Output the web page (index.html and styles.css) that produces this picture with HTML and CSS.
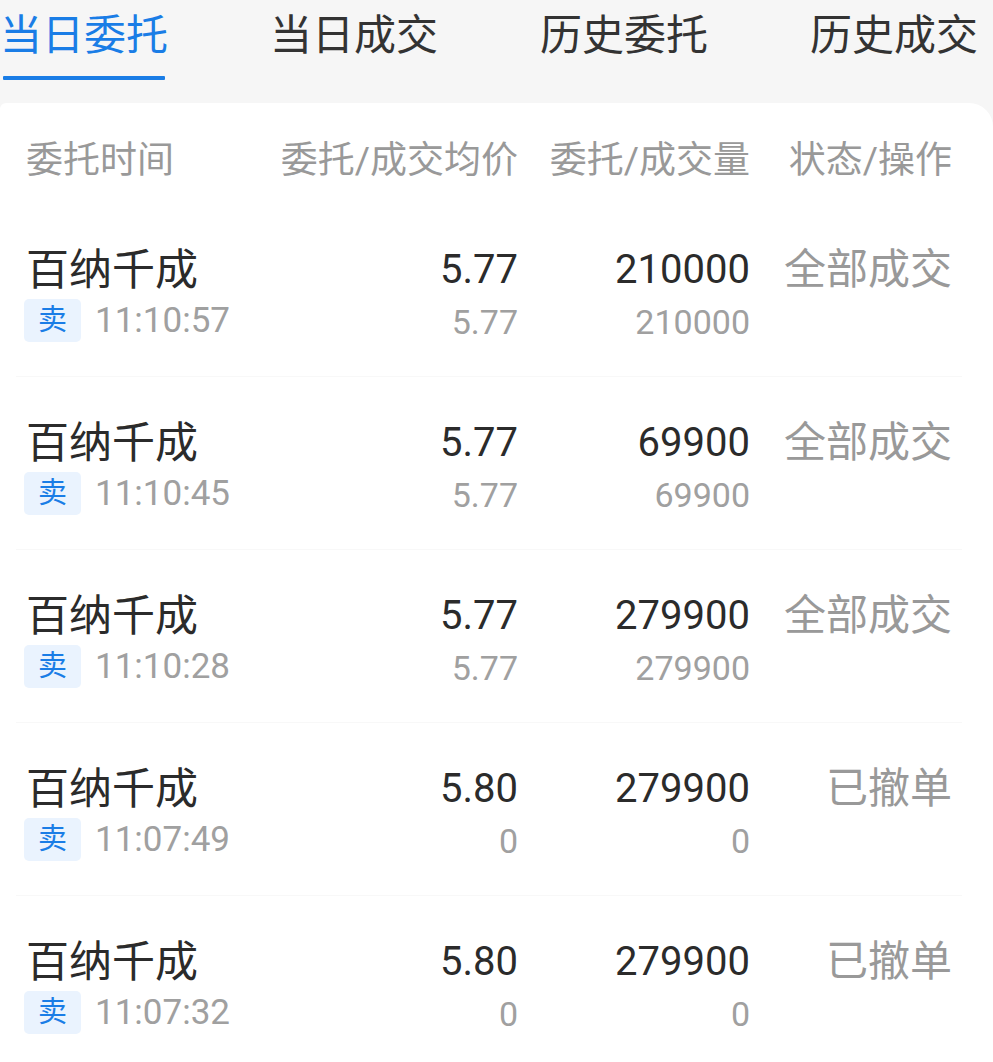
FILE: index.html
```html
<!DOCTYPE html>
<html lang="zh-CN">
<head>
	<meta charset="UTF-8">
	<title>当日委托</title>
	<link rel="stylesheet" href="styles.css">
</head>
<body>
	<div class="tabs">
		<div class="tab active">当日委托</div>
		<div class="tab">当日成交</div>
		<div class="tab">历史委托</div>
		<div class="tab">历史成交</div>
	</div>

	<div class="card">
		<div class="row head">
			<div class="c1">委托时间</div>
			<div class="c2">委托/成交均价</div>
			<div class="c3">委托/成交量</div>
			<div class="c4">状态/操作</div>
		</div>

		<div class="row order">
			<div class="c1">
				<div class="main">百纳千成</div>
				<div class="sub"><span class="side">卖</span>11:10:57</div>
			</div>
			<div class="c2"><div class="main">5.77</div><div class="sub">5.77</div></div>
			<div class="c3"><div class="main">210000</div><div class="sub">210000</div></div>
			<div class="c4"><div class="main state">全部成交</div></div>
		</div>

		<div class="row order">
			<div class="c1">
				<div class="main">百纳千成</div>
				<div class="sub"><span class="side">卖</span>11:10:45</div>
			</div>
			<div class="c2"><div class="main">5.77</div><div class="sub">5.77</div></div>
			<div class="c3"><div class="main">69900</div><div class="sub">69900</div></div>
			<div class="c4"><div class="main state">全部成交</div></div>
		</div>

		<div class="row order">
			<div class="c1">
				<div class="main">百纳千成</div>
				<div class="sub"><span class="side">卖</span>11:10:28</div>
			</div>
			<div class="c2"><div class="main">5.77</div><div class="sub">5.77</div></div>
			<div class="c3"><div class="main">279900</div><div class="sub">279900</div></div>
			<div class="c4"><div class="main state">全部成交</div></div>
		</div>

		<div class="row order">
			<div class="c1">
				<div class="main">百纳千成</div>
				<div class="sub"><span class="side">卖</span>11:07:49</div>
			</div>
			<div class="c2"><div class="main">5.80</div><div class="sub">0</div></div>
			<div class="c3"><div class="main">279900</div><div class="sub">0</div></div>
			<div class="c4"><div class="main state">已撤单</div></div>
		</div>

		<div class="row order">
			<div class="c1">
				<div class="main">百纳千成</div>
				<div class="sub"><span class="side">卖</span>11:07:32</div>
			</div>
			<div class="c2"><div class="main">5.80</div><div class="sub">0</div></div>
			<div class="c3"><div class="main">279900</div><div class="sub">0</div></div>
			<div class="c4"><div class="main state">已撤单</div></div>
		</div>
	</div>
</body>
</html>
```

FILE: styles.css
```css
body {
	margin: 0;
	background-color: #f6f6f6;
	font-family: Roboto, "Noto Sans CJK SC", sans-serif;
	color: #333;
}
.tabs {
	display: flex;
	gap: 102px;
	height: 103px;
	padding-top: 8px;
	box-sizing: border-box;
}
.tab {
	font-size: 42px;
	line-height: 56px;
	color: #333;
}
.tab.active {
	color: #1a7de6;
}
.tab.active::after {
	content: "";
	display: block;
	height: 4px;
	margin: 12px 3px 0 3px;
	background-color: #1a7de6;
	border-radius: 1px;
}
.card {
	background-color: #fff;
	border-radius: 6px 24px 0 0;
	padding: 0 41px 0 26px;
	min-height: 959px;
}
.row {
	display: grid;
	grid-template-columns: 244px 248px 232px 202px;
}
.c2, .c3, .c4 {
	text-align: right;
}
.head {
	padding: 36px 0 20px 0;
	font-size: 37px;
	line-height: 44px;
	color: #999;
}
.order {
	height: 173px;
	box-sizing: border-box;
	padding: 40px 10px 0 10px;
	border-top: 1px solid #f8f8f8;
	margin: 0 -10px;
}
.head + .order {
	border-top-color: transparent;
}
.main {
	font-size: 40px;
	line-height: 52px;
	height: 52px;
	margin-bottom: 3px;
	color: #2b2b2b;
}
.c1 .main {
	font-size: 43px;
}
.state {
	font-size: 42px;
	color: #999;
}
.sub {
	font-size: 34px;
	line-height: 43px;
	color: #a0a0a0;
	padding-top: 2px;
}
.c1 .sub {
	display: flex;
	align-items: center;
	gap: 14px;
	font-size: 35px;
	padding-top: 0;
	margin-left: -2px;
}
.side {
	display: inline-block;
	width: 57px;
	height: 43px;
	line-height: 43px;
	text-align: center;
	font-size: 29px;
	color: #1a7de6;
	background-color: #eaf3fe;
	border-radius: 5px;
}
```
